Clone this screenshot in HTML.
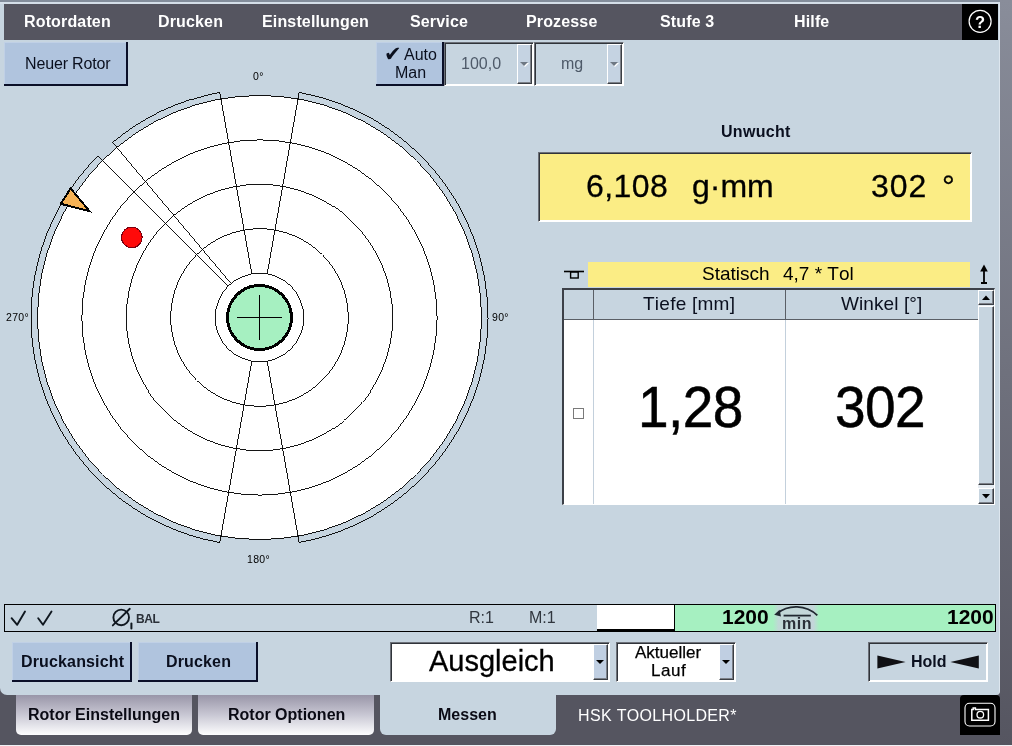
<!DOCTYPE html>
<html lang="de">
<head>
<meta charset="utf-8">
<title>Messen</title>
<style>
*{box-sizing:border-box;margin:0;padding:0}
html,body{width:1012px;height:746px;overflow:hidden}
body{position:relative;background:#555560;font-family:"Liberation Sans",sans-serif;font-size:16px;color:#0a0f1e;font-kerning:none}
.a{position:absolute}
.t{position:absolute;white-space:pre;line-height:1;will-change:transform}
svg{will-change:transform}
.b{font-weight:bold}
.big{font-size:55px;color:#000;transform:scaleY(1.035);transform-origin:0 47px;letter-spacing:-.6px;-webkit-text-stroke:.5px #000}
.med{-webkit-text-stroke:.3px #000}
#topline{left:0;top:0;width:1012px;height:2px;background:#838d9b}
#strip{left:1000px;top:0;width:12px;height:746px;background:linear-gradient(#898d9a,#555560)}
#panel{left:0;top:2px;width:1000px;height:693px;background:#c7d5e0;border-radius:0 0 4px 7px;border-top:2px solid #d4dee8;border-right:1px solid #dde6ee}
#botline{left:0;top:745px;width:1012px;height:1px;background:#f0f1f5}
#menu{left:4px;top:4px;width:958px;height:36px;background:#555560}
#menu .t{color:#fff;font-weight:bold;font-size:16px;top:10px;letter-spacing:.15px}
#help{left:962px;top:4px;width:36px;height:36px;background:#000}
.btn{position:absolute;background:#b0c4de;box-shadow:inset 1px 1px 0 #c0d0e6;border-right:2px solid #0a0f28;border-bottom:2px solid #0a0f28}
.sunk{position:absolute;border:1px solid;border-color:#6c7078 #fff #fff #6c7078;box-shadow:inset 1px 1px 0 #30343a,inset -1px -1px 0 #fff}
.dd{position:absolute;background:#c0cfe2;border:1px solid;border-color:#fff #3a3e44 #3a3e44 #fff;box-shadow:inset -1px -1px 0 #7c8088}
.dd.dis{background:#c5d3e2}
.dd.sb{background:#c7d5e0}
.dd.sb:after{display:none}
.dd:after{content:"";position:absolute;left:50%;top:50%;margin:-2.5px 0 0 -4.5px;border:4px solid transparent;border-top-color:#000;border-bottom-width:0}
.dd.dis:after{border-top-color:#6e7884;filter:drop-shadow(1px 1px 0 #fff)}
.tab{position:absolute;top:695px;height:40px;border-radius:0 0 5px 5px;background:linear-gradient(#9996a8,#c9c8d4 50%,#fdfdfe)}
.tab .t,.tabtxt{font-weight:bold;font-size:16px;color:#0a0a14}
</style>
</head>
<body>
<div class="a" id="topline"></div>
<div class="a" id="strip"></div>
<div class="a" id="panel"></div>
<div class="a" id="botline"></div>

<!-- menu -->
<div class="a" id="menu">
<span class="t" style="left:20px">Rotordaten</span>
<span class="t" style="left:154px">Drucken</span>
<span class="t" style="left:258px">Einstellungen</span>
<span class="t" style="left:406px">Service</span>
<span class="t" style="left:522px">Prozesse</span>
<span class="t" style="left:656px">Stufe 3</span>
<span class="t" style="left:790px">Hilfe</span>
</div>
<div class="a" id="help">
<svg width="36" height="36" viewBox="0 0 36 36" style="position:absolute;left:0;top:0"><circle cx="18.1" cy="17.3" r="11" fill="none" stroke="#fff" stroke-width="1.2"/><text x="18.1" y="23.9" text-anchor="middle" font-family="Liberation Sans, sans-serif" font-weight="bold" font-size="16.5" fill="#fff">?</text></svg>
</div>

<!-- toolbar -->
<div class="btn" style="left:4px;top:42px;width:124px;height:44px"></div>
<span class="t" style="left:24.5px;top:56px;font-size:16px;letter-spacing:-.15px">Neuer Rotor</span>

<div class="btn" style="left:376px;top:42px;width:68px;height:44px"></div>
<span class="t" style="left:383.5px;top:43.5px;font-size:21px;font-family:'DejaVu Sans',sans-serif">✔</span>
<span class="t" style="left:404px;top:47px;font-size:16px">Auto</span>
<span class="t" style="left:395px;top:65px;font-size:16px">Man</span>

<div class="sunk" style="left:444px;top:42px;width:90px;height:44px"></div>
<div class="dd dis" style="left:517px;top:44px;width:15px;height:40px"></div>
<span class="t" style="left:461px;top:56px;font-size:16px;color:#4e5a69">100,0</span>
<div class="sunk" style="left:534px;top:42px;width:90px;height:44px"></div>
<div class="dd dis" style="left:607px;top:44px;width:15px;height:40px"></div>
<span class="t" style="left:561px;top:56px;font-size:16px;color:#4e5a69">mg</span>

<!-- polar chart -->
<svg class="a" style="left:0;top:60px" width="530" height="520" viewBox="0 60 530 520">
<g fill="none" stroke="#000" stroke-width=".92" shape-rendering="crispEdges">
<circle cx="259.5" cy="317.5" r="222" fill="#fff"/>
<circle cx="259.5" cy="317.5" r="177.6"/>
<circle cx="259.5" cy="317.5" r="133.2"/>
<circle cx="259.5" cy="317.5" r="88.8"/>
<circle cx="259.5" cy="317.5" r="44.4"/>
<path d="M299.18 92.47A228.5 228.5 0 0 1 299.18 542.53 M219.82 542.53A228.5 228.5 0 0 1 97.93 155.93 M112.62 142.46A228.5 228.5 0 0 1 219.82 92.47 M251.79 273.77L219.82 92.47 M267.21 273.77L299.18 92.47 M267.21 361.23L299.18 542.53 M251.79 361.23L219.82 542.53 M228.10 286.10L97.93 155.93 M230.96 283.49L112.62 142.46"/>
<circle cx="259.5" cy="317.5" r="32" fill="#a6f0c1" stroke-width="3"/>
<path d="M237 317.5H282M259.5 295V340" stroke-width="1"/>
<path d="M70.6 188.4L60.8 203.8L89.6 211.2Z" fill="#f6b255" stroke-width="2" stroke-linejoin="miter"/>
<circle cx="131.8" cy="237.4" r="10.3" fill="#ff0a0a" stroke="#7a0010" stroke-width="1"/>
</g>
<g font-family="Liberation Sans, sans-serif" font-size="10.5" fill="#000" style="letter-spacing:.3px">
<text x="253" y="79.8">0°</text>
<text x="6" y="320.9">270°</text>
<text x="492" y="320.8">90°</text>
<text x="247" y="562.6">180°</text>
</g>
</svg>

<!-- Unwucht -->
<span class="t b" style="left:720.5px;top:124px;font-size:16px;letter-spacing:.3px">Unwucht</span>
<div class="sunk" style="left:538px;top:152px;width:434px;height:70px;background:#fbed85"></div>
<span class="t med" style="left:585.5px;top:170px;font-size:32px;color:#000;letter-spacing:.4px">6,108</span><span class="t med" style="left:692px;top:170px;font-size:32px;color:#000">g·mm</span>
<span class="t med" style="left:870.5px;top:170px;font-size:32px;color:#000;letter-spacing:.9px">302</span><span class="t med" style="left:941.5px;top:170px;font-size:32px;color:#000">°</span>

<!-- Statisch bar -->
<svg class="a" style="left:562px;top:266px" width="26" height="16" viewBox="0 0 26 16"><path d="M2 5.5H22" stroke="#000" stroke-width="1.6" fill="none"/><rect x="8.6" y="6" width="7.6" height="6" fill="none" stroke="#000" stroke-width="1.4"/></svg>
<div class="a" style="left:588px;top:262px;width:382px;height:25px;background:#fbed85"></div>
<span class="t" style="left:702px;top:263.5px;font-size:19px;color:#000">Statisch</span><span class="t" style="left:783px;top:263.5px;font-size:19px;color:#000">4,7 * Tol</span>
<svg class="a" style="left:976px;top:262px" width="16" height="24" viewBox="0 0 16 24"><path d="M8 2.5L11.8 9.6H4.2Z" fill="#000"/><path d="M8 8V21M5 21H11" stroke="#000" stroke-width="1.8" fill="none"/></svg>

<!-- table -->
<div class="a" style="left:562px;top:288px;width:433px;height:217px;background:#fff;border-top:2px solid #3c4048;border-left:2px solid #3c4048;border-right:1px solid #fff;border-bottom:1px solid #fff"></div>
<div class="a" style="left:564px;top:290px;width:414px;height:30px;background:#c7d5e0;border-bottom:1px solid #5a5f66"></div>
<div class="a" style="left:593px;top:290px;width:1px;height:30px;background:#5a5f66"></div>
<div class="a" style="left:785px;top:290px;width:1px;height:30px;background:#5a5f66"></div>
<div class="a" style="left:593px;top:320px;width:1px;height:184px;background:#c3d0dc"></div>
<div class="a" style="left:785px;top:320px;width:1px;height:184px;background:#c3d0dc"></div>
<span class="t" style="left:643px;top:294px;font-size:19px;letter-spacing:.25px">Tiefe [mm]</span>
<span class="t" style="left:840.5px;top:294px;font-size:19px;letter-spacing:.1px">Winkel [°]</span>
<div class="a" style="left:573px;top:408px;width:11px;height:11px;background:#fff;border:1px solid #7a7a7a"></div>
<span class="t big" style="left:637.5px;top:381px">1,28</span>
<span class="t big" style="left:835px;top:381px">302</span>
<!-- scrollbar -->
<div class="a" style="left:978px;top:290px;width:16px;height:214px;background:#e6ecf2"></div>
<div class="dd sb" style="left:978px;top:290px;width:16px;height:15px"></div>
<svg class="a" style="left:978px;top:290px" width="16" height="15"><path d="M4 10H12L8 5.6Z" fill="#000"/></svg>
<div class="dd sb" style="left:978px;top:306px;width:16px;height:179px"></div>
<div class="dd sb" style="left:978px;top:488px;width:16px;height:16px"></div>
<svg class="a" style="left:978px;top:488px" width="16" height="16"><path d="M4 6H12L8 10.4Z" fill="#000"/></svg>

<!-- status bar -->
<div class="a" style="left:4px;top:604px;width:992px;height:28px;border:1px solid #000"></div>
<svg class="a" style="left:5px;top:605px" width="170" height="26" viewBox="5 605 170 26">
<g fill="none" stroke="#101820" stroke-width="1.9" stroke-linecap="round" stroke-linejoin="round">
<path d="M11.6 618.2L17.2 624.8L25 611.6"/>
<path d="M38.2 618.2L43 624.8L51.5 611.6"/>
<circle cx="121.2" cy="617.4" r="7.8"/>
<path d="M112.8 625.4L129.8 608.8"/>
<path d="M131.4 623.6V628.6" stroke-width="2"/>
</g>
</svg>
<span class="t b" style="left:136.3px;top:612.6px;font-size:12px;color:#2a3038;letter-spacing:-.4px">BAL</span>
<span class="t" style="left:469px;top:610px;font-size:16px;color:#30363e">R:1</span>
<span class="t" style="left:529px;top:610px;font-size:16px;color:#30363e">M:1</span>
<div class="a" style="left:597px;top:605px;width:78px;height:26px;background:#fff;border-right:1px solid #000;border-bottom:2px solid #000"></div>
<div class="a" style="left:675px;top:605px;width:320px;height:26px;background:#a6f0c1"></div>
<div class="a" style="left:773px;top:605px;width:46px;height:26px;background:linear-gradient(90deg,#a6f0c1,#c0d8d6 12%,#c4d6da 88%,#a6f0c1)"></div>
<span class="t b" style="left:721.5px;top:605.5px;font-size:21px;color:#000">1200</span>
<span class="t b" style="left:946.5px;top:605.5px;font-size:21px;color:#000">1200</span>
<svg class="a" style="left:773px;top:605px" width="46" height="26" viewBox="773 605 46 26">
<path d="M777.5 613.4C788 604.4 806 604.4 817.3 615.4" fill="none" stroke="#202830" stroke-width="1.9"/>
<path d="M774.2 614.8L779.6 609.8L781 616.6Z" fill="#202830"/>
<path d="M783.6 615.6H810.8" stroke="#202830" stroke-width="1.8"/>
</svg>
<span class="t b" style="left:782px;top:615.5px;font-size:16px;color:#2a3038;letter-spacing:.6px">min</span>

<!-- bottom buttons -->
<div class="btn" style="left:12px;top:642px;width:120px;height:40px"></div>
<span class="t b" style="left:20.5px;top:653.5px;letter-spacing:.15px">Druckansicht</span>
<div class="btn" style="left:138px;top:642px;width:120px;height:40px"></div>
<span class="t b" style="left:166px;top:653.5px;letter-spacing:.15px">Drucken</span>

<div class="sunk" style="left:390px;top:642px;width:220px;height:40px;background:#fff"></div>
<div class="dd" style="left:593px;top:644px;width:15px;height:36px"></div>
<span class="t med" style="left:429px;top:647px;font-size:29px;color:#000">Ausgleich</span>
<div class="sunk" style="left:616px;top:642px;width:120px;height:40px;background:#fff"></div>
<div class="dd" style="left:719px;top:644px;width:15px;height:36px"></div>
<span class="t" style="left:635px;top:644px;font-size:17px;color:#000;-webkit-text-stroke:.25px #000">Aktueller</span>
<span class="t" style="left:650.8px;top:662px;font-size:17px;color:#000;letter-spacing:.55px;-webkit-text-stroke:.25px #000">Lauf</span>

<div class="sunk" style="left:868px;top:642px;width:120px;height:40px"></div>
<svg class="a" style="left:870px;top:650px" width="116" height="24" viewBox="870 650 116 24"><path d="M877.4 655.4V668.4L905.6 661.9Z" fill="#101014"/><path d="M978.8 655.4V668.4L950.4 661.9Z" fill="#101014"/></svg>
<span class="t b" style="left:911px;top:654px">Hold</span>

<!-- tabs -->
<div class="tab" style="left:16px;width:176px"></div>
<span class="t tabtxt" style="left:28px;top:707px">Rotor Einstellungen</span>
<div class="tab" style="left:198px;width:176px"></div>
<span class="t tabtxt" style="left:228px;top:707px">Rotor Optionen</span>
<div class="a" style="left:380px;top:694px;width:176px;height:41px;background:#c7d5e0;border-radius:0 0 6px 6px"></div>
<span class="t tabtxt" style="left:438px;top:707px">Messen</span>
<span class="t" style="left:578px;top:708px;font-size:16px;color:#fff;letter-spacing:.33px">HSK TOOLHOLDER*</span>
<div class="a" style="left:960px;top:695px;width:40px;height:40px;background:#000;border-radius:4px 4px 0 0"></div>
<svg class="a" style="left:960px;top:695px" width="40" height="40" viewBox="960 695 40 40">
<g fill="none" stroke="#fff">
<rect x="965" y="703.2" width="30" height="22.8" rx="4.5" stroke-width="1.1"/>
<path d="M971.8 709.4H973.2V708H975.4V709.4H988.4V720.2H971.8Z" stroke-width="1.5"/>
<circle cx="980.3" cy="714.7" r="3.3" stroke-width="1.3"/>
</g>
</svg>
</body>
</html>
